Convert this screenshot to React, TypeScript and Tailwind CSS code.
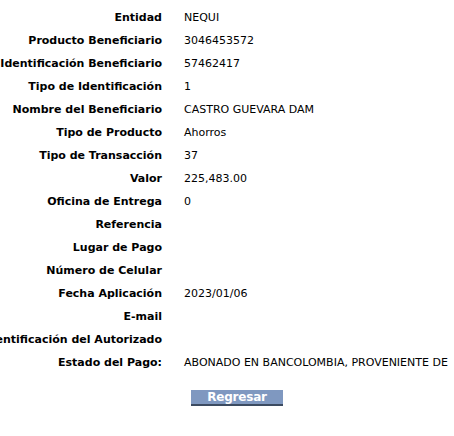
const rows: [string, string][] = [
  ["Entidad", "NEQUI"],
  ["Producto Beneficiario", "3046453572"],
  ["Identificación Beneficiario", "57462417"],
  ["Tipo de Identificación", "1"],
  ["Nombre del Beneficiario", "CASTRO GUEVARA DAM"],
  ["Tipo de Producto", "Ahorros"],
  ["Tipo de Transacción", "37"],
  ["Valor", "225,483.00"],
  ["Oficina de Entrega", "0"],
  ["Referencia", ""],
  ["Lugar de Pago", ""],
  ["Número de Celular", ""],
  ["Fecha Aplicación", "2023/01/06"],
  ["E-mail", ""],
  ["Identificación del Autorizado", ""],
  ["Estado del Pago:", "ABONADO EN BANCOLOMBIA, PROVENIENTE DE"],
];

export default function App() {
  return (
    <div className="w-[454px] h-[436px] overflow-hidden bg-white text-[11px] text-black font-['DejaVu_Sans',Verdana,sans-serif]">
      {/* Detail table */}
      <div className="pt-[7px] flex flex-col">
        {rows.map(([label, value]) => (
          <div key={label} className="flex h-[23px] items-center">
            <div className="w-[162px] shrink-0 flex justify-end whitespace-nowrap font-bold">
              {label}
            </div>
            <div className="pl-[22px] whitespace-nowrap">{value}</div>
          </div>
        ))}
      </div>

      {/* Actions */}
      <div className="mt-[15px] pl-[191px]">
        <button className="w-[92px] h-[16px] bg-[#7f98c0] border-b-2 border-[#3c4b61] text-white font-bold text-[12px] leading-[14px] tracking-[-0.2px]">
          Regresar
        </button>
      </div>
    </div>
  );
}
